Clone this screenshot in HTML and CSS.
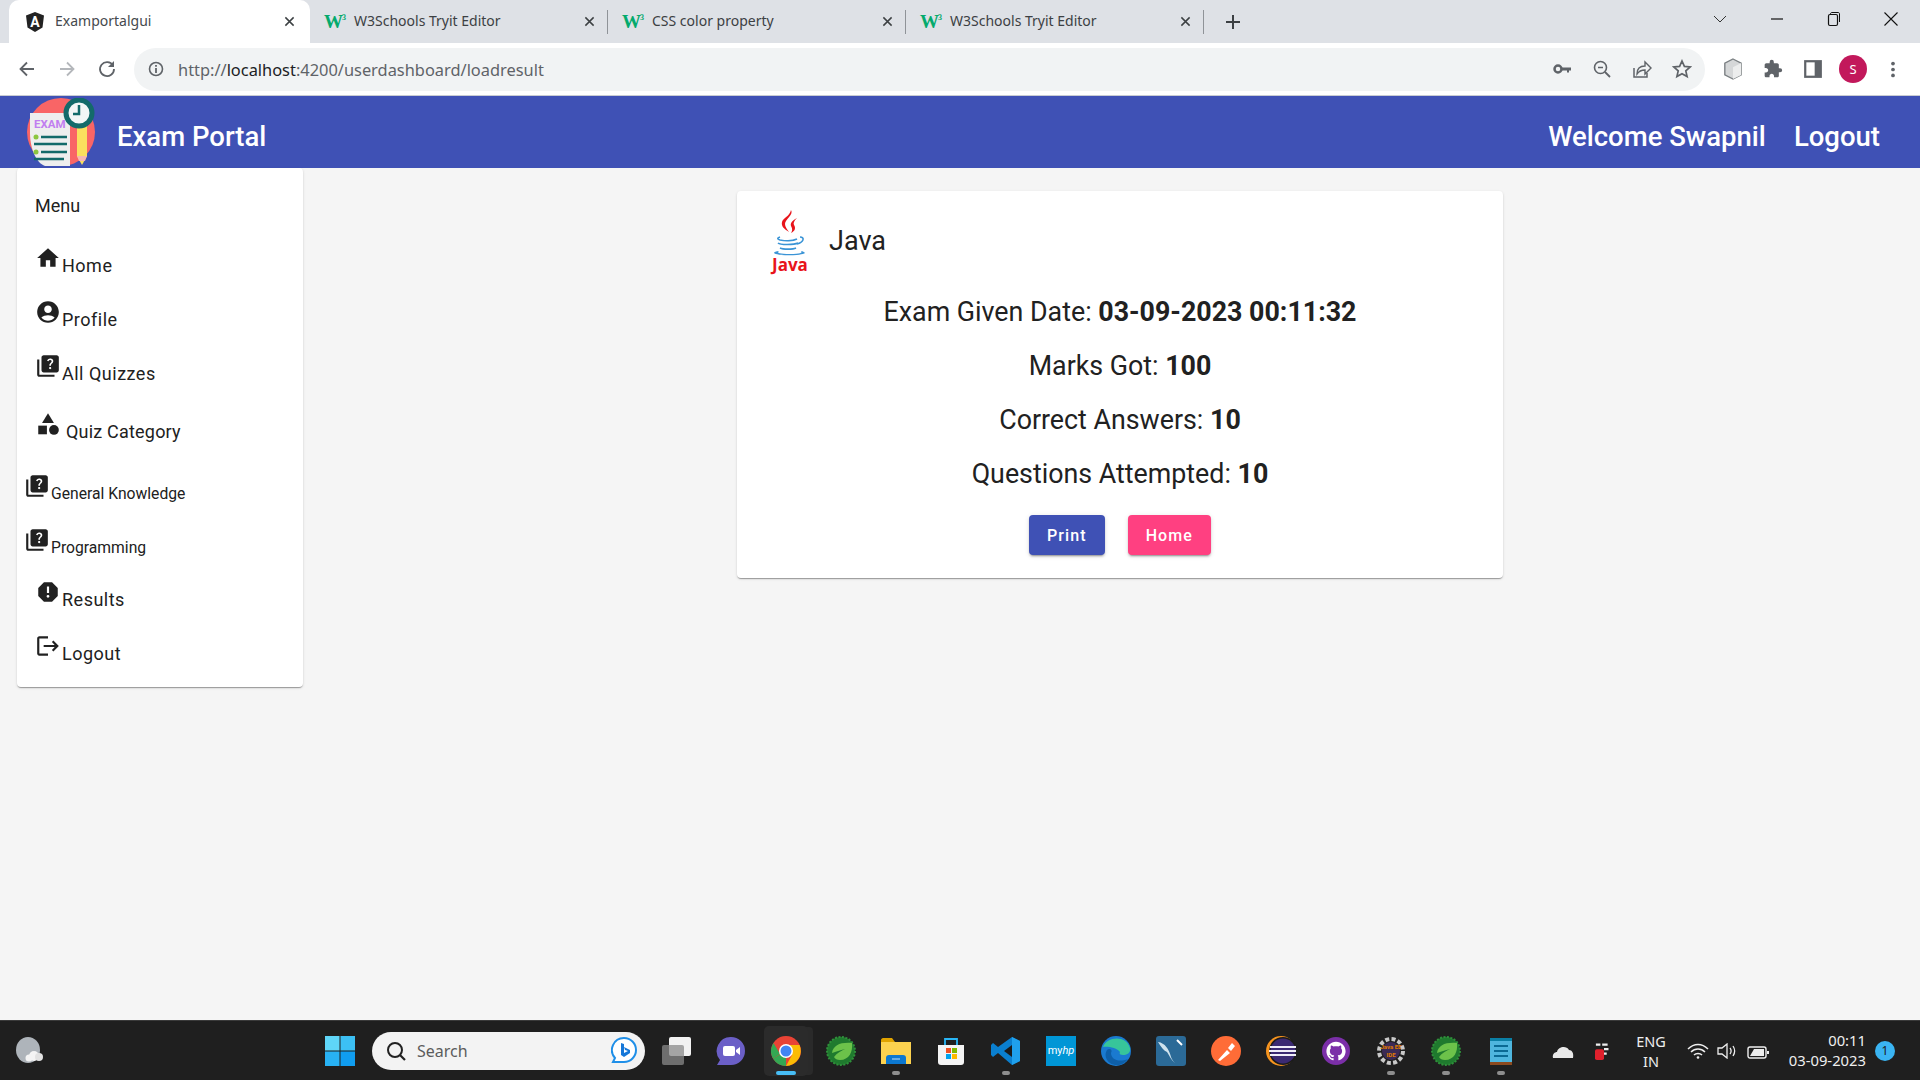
FILE: index.html
```html
<!DOCTYPE html>
<html lang="en">
<head>
    <meta charset="UTF-8">
    <meta name="viewport" content="width=device-width, initial-scale=1.0">
    <title>Examportalgui</title>
    <link rel="stylesheet" href="styles.css">
</head>
<body>
    <!-- shared icons -->
    <svg class="defs" width="0" height="0">
        <symbol id="i-quiz" viewBox="0 0 24 24"><path d="M4 6H2v14c0 1.1.9 2 2 2h14v-2H4V6zm16-4H8c-1.1 0-2 .9-2 2v12c0 1.1.9 2 2 2h12c1.1 0 2-.9 2-2V4c0-1.1-.9-2-2-2zm-5.99 13c-.59 0-1.05-.47-1.05-1.05 0-.59.47-1.04 1.05-1.04.59 0 1.04.45 1.04 1.04-.01.58-.45 1.05-1.04 1.05zm2.5-6.17c-.63.93-1.23 1.21-1.56 1.81-.13.24-.18.4-.18 1.18h-1.52c0-.41-.06-1.08.26-1.65.41-.73 1.18-1.16 1.63-1.8.48-.68.21-1.94-1.14-1.94-.88 0-1.32.67-1.5 1.23l-1.37-.57C11.51 5.96 12.52 5 13.99 5c1.23 0 2.08.56 2.51 1.26.37.61.58 1.73.01 2.57z"/></symbol>
        <symbol id="i-close" viewBox="0 0 12 12"><path d="M1.5 1.5l9 9M10.5 1.5l-9 9" stroke="#3c4043" stroke-width="1.6" fill="none"/></symbol>
        <symbol id="i-spring" viewBox="0 0 30 30"><circle cx="15" cy="15" r="14" fill="#1f7a2e" stroke="#2f8f3a" stroke-width="2" stroke-dasharray="2 1.5"/><path d="M6 17C7 9 15 6 26 7c1 9-3 17-12 17-3 0-5-1-6-3 3-4 7-6 11-8-5 1-9 3-13 4z" fill="#6cc24a"/></symbol>
    </svg>

    <div class="tab-strip">
        <div class="tab tab-active">
            <svg class="favicon" viewBox="0 0 20 20"><polygon points="10,0 19,3.5 17.5,15.5 10,20 2.5,15.5 1,3.5" fill="#222"/><text x="10" y="15" class="ng-letter">A</text></svg>
            <span class="tab-title">Examportalgui</span>
            <svg class="tab-close"><use href="#i-close"/></svg>
        </div>
        <div class="tab tab-sep">
            <span class="w3">W<sup>3</sup></span>
            <span class="tab-title">W3Schools Tryit Editor</span>
            <svg class="tab-close"><use href="#i-close"/></svg>
        </div>
        <div class="tab tab-sep">
            <span class="w3">W<sup>3</sup></span>
            <span class="tab-title">CSS color property</span>
            <svg class="tab-close"><use href="#i-close"/></svg>
        </div>
        <div class="tab tab-sep">
            <span class="w3">W<sup>3</sup></span>
            <span class="tab-title">W3Schools Tryit Editor</span>
            <svg class="tab-close"><use href="#i-close"/></svg>
        </div>
        <svg class="new-tab" viewBox="0 0 16 16"><path d="M8 1v14M1 8h14" stroke="#3c4043" stroke-width="2"/></svg>
        <div class="win-controls">
            <svg viewBox="0 0 16 16"><path d="M2 5l6 6 6-6" stroke="#333" fill="none"/></svg>
            <svg viewBox="0 0 16 16"><path d="M2 8h12" stroke="#111" stroke-width="1.2"/></svg>
            <svg viewBox="0 0 16 16"><path d="M4.5 3.5V3c0-1 .5-1.500 1.500-1.500h6c1 0 1.500.5 1.500 1.500v8" stroke="#111" fill="none"/><rect x="2.500" y="3.500" width="9" height="11" rx="1.500" stroke="#111" fill="none" stroke-width="1.200"/></svg>
            <svg viewBox="0 0 16 16"><path d="M1.500 1.500l13 13M14.500 1.500l-13 13" stroke="#111" stroke-width="1.100"/></svg>
        </div>
    </div>

    <div class="toolbar">
        <svg class="nav-icon" viewBox="0 0 20 20"><path d="M17 10H4M10 3.500L3.500 10l6.500 6.500" stroke="#5f6368" stroke-width="1.800" fill="none"/></svg>
        <svg class="nav-icon" viewBox="0 0 20 20"><path d="M3 10h13M10 3.500l6.500 6.500-6.500 6.500" stroke="#b4b7bb" stroke-width="1.800" fill="none"/></svg>
        <svg class="nav-icon" viewBox="0 0 20 20"><path d="M16 6.500A7 7 0 1 0 17 10" stroke="#5f6368" stroke-width="1.800" fill="none"/><path d="M17 2v6h-6z" fill="#5f6368"/></svg>
        <div class="omnibox">
            <svg class="info" viewBox="0 0 16 16"><circle cx="8" cy="8" r="6.500" stroke="#5f6368" stroke-width="1.600" fill="none"/><path d="M8 7v5M8 4v1.800" stroke="#5f6368" stroke-width="1.800"/></svg>
            <div class="url">http://<span class="host">localhost</span>:4200/userdashboard/loadresult</div>
            <svg class="omni-icon" viewBox="0 0 20 20"><circle cx="6" cy="10" r="3.500" fill="none" stroke="#5f6368" stroke-width="2.500"/><path d="M9 8.500h10v3h-2v2h-2v-2H9z" fill="#5f6368"/></svg>
            <svg class="omni-icon" viewBox="0 0 20 20"><circle cx="8.500" cy="8.500" r="6" stroke="#5f6368" stroke-width="1.600" fill="none"/><path d="M13 13l5 5" stroke="#5f6368" stroke-width="1.800"/><path d="M6 8.500h5" stroke="#5f6368" stroke-width="1.500"/></svg>
            <svg class="omni-icon" viewBox="0 0 20 20"><path d="M2 9v9h13v-4" stroke="#5f6368" stroke-width="1.500" fill="none"/><path d="M5 15c0-5 3-8 8-8V3l6 6-6 6v-4c-4 0-6 1-8 4z" stroke="#5f6368" stroke-width="1.400" fill="none"/></svg>
            <svg class="omni-icon" viewBox="0 0 20 20"><path d="M10 2l2.400 5.400 5.800.6-4.400 3.900 1.300 5.700L10 14.700l-5.100 2.900 1.300-5.700L1.800 8l5.800-.6z" stroke="#5f6368" stroke-width="1.700" fill="none"/></svg>
        </div>
        <div class="ext-icons">
            <svg class="ext-icon" viewBox="0 0 22 24"><path d="M11 1l9 4.500v13L11 23l-9-4.500v-13z" fill="#d5d7d8" stroke="#7b8083" stroke-width="1.500"/><path d="M11 10l9-4.500v13L11 23z" fill="#eceded"/></svg>
            <svg class="ext-icon" viewBox="0 0 24 24"><path d="M20.500 11H19V7c0-1.100-.9-2-2-2h-4V3.500a2.500 2.500 0 0 0-5 0V5H4c-1.100 0-2 .9-2 2v3.800h1.500c1.500 0 2.700 1.200 2.700 2.700S5 16.200 3.500 16.200H2V20c0 1.100.9 2 2 2h3.800v-1.500c0-1.500 1.200-2.700 2.700-2.700s2.700 1.200 2.700 2.700V22H17c1.100 0 2-.9 2-2v-4h1.500a2.500 2.500 0 0 0 0-5z" fill="#5f6368"/></svg>
            <svg class="ext-icon" viewBox="0 0 18 18"><path d="M1 1h16v16H1z" fill="#5f6368"/><path d="M3 3h7.500v12H3z" fill="#fff"/></svg>
            <div class="avatar">S</div>
            <svg class="ext-icon kebab" viewBox="0 0 6 20"><circle cx="3" cy="3" r="2.200" fill="#5f6368"/><circle cx="3" cy="10" r="2.200" fill="#5f6368"/><circle cx="3" cy="17" r="2.200" fill="#5f6368"/></svg>
        </div>
    </div>

    <header class="app-header">
        <svg class="logo" viewBox="0 0 68 68">
            <circle cx="34" cy="34" r="34" fill="#f96566"/>
            <path d="M3 15h34l6 6v47H18C9 65 3 50 3 35z" fill="#eeeeee"/>
            <text x="7" y="30" class="logo-exam">EXAM</text>
            <circle cx="9" cy="39" r="2.500" fill="#8cc63f"/>
            <path d="M14 39h26M7 46h33M14 54h26M7 61h30" stroke="#136a6a" stroke-width="2.500"/>
            <circle cx="9" cy="54" r="2.500" fill="#8cc63f"/>
            <path d="M50 28h10v30l-5 9-5-9z" fill="#fbe05e"/>
            <path d="M50 58h10l-2 5h-6z" fill="#f7b7b2"/>
            <circle cx="52" cy="15" r="13" fill="#f3f6f6" stroke="#136a6a" stroke-width="5"/>
            <path d="M52 7v9h-6" stroke="#136a6a" stroke-width="2.500" fill="none"/>
        </svg>
        <div class="brand">Exam Portal</div>
        <div class="welcome">Welcome Swapnil</div>
        <div class="header-logout">Logout</div>
    </header>

    <main class="page">
        <aside class="sidebar">
            <div class="menu-title">Menu</div>
            <div class="menu-item">
                <svg class="mi" viewBox="0 0 24 24"><path d="M10 20v-6h4v6h5v-8h3L12 3 2 12h3v8z"/></svg>
                <span>Home</span>
            </div>
            <div class="menu-item">
                <svg class="mi" viewBox="0 0 24 24"><path d="M12 2C6.480 2 2 6.480 2 12s4.480 10 10 10 10-4.480 10-10S17.520 2 12 2zm0 4c1.930 0 3.500 1.570 3.500 3.500S13.930 13 12 13s-3.500-1.570-3.500-3.500S10.070 6 12 6zm0 14c-2.030 0-4.430-.82-6.140-2.880C7.550 15.800 9.680 15 12 15s4.450.8 6.140 2.120C16.430 19.180 14.030 20 12 20z"/></svg>
                <span>Profile</span>
            </div>
            <div class="menu-item">
                <svg class="mi"><use href="#i-quiz"/></svg>
                <span>All Quizzes</span>
            </div>
            <div class="menu-item item-category">
                <svg class="mi" viewBox="0 0 24 24"><path d="M12 2l-5.500 9h11z"/><circle cx="17.500" cy="17.500" r="4.500"/><path d="M3 13.500h8v8H3z"/></svg>
                <span>Quiz Category</span>
            </div>
            <div class="menu-item item-sub item-sub-first">
                <svg class="mi"><use href="#i-quiz"/></svg>
                <span>General Knowledge</span>
            </div>
            <div class="menu-item item-sub">
                <svg class="mi"><use href="#i-quiz"/></svg>
                <span>Programming</span>
            </div>
            <div class="menu-item item-results">
                <svg class="mi" viewBox="0 0 24 24"><path d="M15.730 3H8.270L3 8.270v7.460L8.270 21h7.460L21 15.730V8.270L15.730 3zM12 17.300c-.72 0-1.300-.58-1.300-1.300 0-.72.58-1.300 1.300-1.300.72 0 1.300.58 1.300 1.300 0 .72-.58 1.300-1.300 1.300zm1-4.300h-2V7h2v6z"/></svg>
                <span>Results</span>
            </div>
            <div class="menu-item">
                <svg class="mi" viewBox="0 0 24 24"><path d="M17 7l-1.410 1.410L18.170 11H8v2h10.170l-2.580 2.580L17 17l5-5zM4 5h8V3H4c-1.100 0-2 .9-2 2v14c0 1.100.9 2 2 2h8v-2H4V5z"/></svg>
                <span>Logout</span>
            </div>
        </aside>

        <section class="result-card">
            <div class="card-head">
                <svg class="java-logo" viewBox="0 0 40 68">
                    <path d="M21 1c3 5-6 9-6 14 0 3 2 5 4 8-5-3-8-6-7-10 1-4 8-6 9-12z" fill="#e8141b"/>
                    <path d="M27 9c-5 3-7 5-6 8 1 2 2 4 0 7 4-2 5-5 3-8-1-2 0-4 3-7z" fill="#e8141b"/>
                    <path d="M10 28c-3 1-3 2 0 3 5 1 13 1 17-1M8 34c2 2 16 2 20 0M10 39c3 1.500 13 1.500 16 0M30 28c5 0 4 5-3 7" stroke="#3a94d6" stroke-width="1.600" fill="none"/>
                    <path d="M4 44c2 3 28 3 31 0-1-1-2-2-4-2 2 2-1 3-11 3S6 44 9 42c-3 0-5 1-5 2z" fill="#3a94d6"/>
                    <text x="2" y="62" class="java-word">Java</text>
                </svg>
                <div class="card-title">Java</div>
            </div>
            <div class="card-body">
                <p>Exam Given Date: <b>03-09-2023 00:11:32</b></p>
                <p>Marks Got: <b>100</b></p>
                <p>Correct Answers: <b>10</b></p>
                <p>Questions Attempted: <b>10</b></p>
            </div>
            <div class="card-actions">
                <button class="btn btn-primary">Print</button>
                <button class="btn btn-accent">Home</button>
            </div>
        </section>
    </main>

    <footer class="taskbar">
        <svg class="weather" viewBox="0 0 30 30"><ellipse cx="13" cy="14" rx="12" ry="13" fill="#aeb4ba"/><circle cx="19" cy="20" r="5" fill="#f4f4f4"/><circle cx="24" cy="21" r="4" fill="#e2e2e2"/><circle cx="14" cy="22" r="3.500" fill="#f4f4f4"/></svg>

        <svg class="start" viewBox="0 0 30 30">
            <rect x="0" y="0" width="14.500" height="14.500" fill="#5fd6f8"/><rect x="15.500" y="0" width="14.500" height="14.500" fill="#3cc0f4"/>
            <rect x="0" y="15.500" width="14.500" height="14.500" fill="#28b2f4"/><rect x="15.500" y="15.500" width="14.500" height="14.500" fill="#109df0"/>
        </svg>
        <div class="search">
            <svg class="search-glass" viewBox="0 0 20 20"><circle cx="9" cy="9" r="7" stroke="#222" stroke-width="2" fill="none"/><path d="M14 14l5 5" stroke="#222" stroke-width="2.200"/></svg>
            <span class="search-text">Search</span>
            <svg class="bing" viewBox="0 0 26 28"><path d="M13 1a12 12 0 0 1 0 24H2l2-4A12 12 0 0 1 13 1z" fill="#fff" stroke="#1f8fe8" stroke-width="2"/><path d="M10 6l3 1v9l4-2-3-1-1-3 6 3v3l-6 4-3-2z" fill="#1677d8"/></svg>
        </div>

        <div class="apps">
            <div class="app"><svg viewBox="0 0 30 30"><rect x="8" y="1" width="22" height="19" rx="2" fill="#f2f2f2"/><rect x="1" y="9" width="22" height="20" rx="2" fill="#8a8a8a" opacity=".75"/></svg></div>
            <div class="app"><svg viewBox="0 0 30 30"><path d="M15 1a14 14 0 1 1 0 28H1l3-5A14 14 0 0 1 15 1z" fill="#6b5fc7"/><rect x="7" y="10" width="12" height="10" rx="2" fill="#fff"/><path d="M20 14l4-3v8l-4-3z" fill="#fff"/></svg></div>
            <div class="app app-active"><svg viewBox="0 0 30 30"><circle cx="15" cy="15" r="15" fill="#e94335"/><path d="M15 15L2 22.500A15 15 0 0 0 15 30z" fill="#34a853"/><path d="M2 22.500A15 15 0 0 1 2.500 7L9 18z" fill="#34a853"/><path d="M15 9h13.500A15 15 0 0 1 15 30l6-11z" fill="#fbbc05"/><circle cx="15" cy="15" r="7" fill="#fff"/><circle cx="15" cy="15" r="5.500" fill="#4285f4"/></svg></div>
            <div class="app"><svg><use href="#i-spring"/></svg></div>
            <div class="app app-open"><svg viewBox="0 0 30 30"><path d="M0 4c0-1 1-2 2-2h9l3 4h16v4H0z" fill="#e0a300"/><path d="M0 6h30v22H0z" fill="#fcd24f"/><path d="M5 22c0-2 1-3 3-3h14c2 0 3 1 3 3v6H5z" fill="#0c78d0"/><path d="M11 23h8" stroke="#bfe0fa" stroke-width="1"/></svg></div>
            <div class="app"><svg viewBox="0 0 30 30"><path d="M2 9h26v17c0 2-1 3-3 3H5c-2 0-3-1-3-3z" fill="#f4f4f4"/><path d="M9 9V3h12v6" stroke="#29b6f6" stroke-width="1.800" fill="none"/><rect x="10" y="12" width="5" height="5" fill="#f25022"/><rect x="16" y="12" width="5" height="5" fill="#7fba00"/><rect x="10" y="18" width="5" height="5" fill="#00a4ef"/><rect x="16" y="18" width="5" height="5" fill="#ffb900"/></svg></div>
            <div class="app app-open"><svg viewBox="0 0 30 30"><path d="M21 1l8 4v20l-8 4-14-12-5 4-2-2v-10l2-2 5 4z" fill="#0a7fcf"/><path d="M21 9l-8 6 8 6z" fill="#1b1b1b"/><path d="M21 1l8 4v20l-8 4z" fill="#1fa0ec"/></svg></div>
            <div class="app"><div class="myhp">my<i>hp</i></div></div>
            <div class="app"><svg viewBox="0 0 30 30"><circle cx="15" cy="15" r="15" fill="#1a7ad0"/><path d="M2 11C5 1 25-2 29 12c1 5-3 7-7 7-3 0-4-1-3-3-3-5-14-6-17-5z" fill="#37c59a"/><path d="M10 17c0 6 7 10 17 6-4 6-12 8-18 4-4-3-6-8-3-13 2-2 6-1 4 3z" fill="#0e5fa8"/></svg></div>
            <div class="app"><svg viewBox="0 0 30 30"><rect width="30" height="30" rx="3" fill="#2b6a97"/><path d="M2 6c7 1 11 7 13 15 1 3 3 5 4 6-4-3-6-8-8-11-3-1-6-5-9-10z" fill="#cfe3ee"/><path d="M21 4l5 5" stroke="#fff" stroke-width="2"/></svg></div>
            <div class="app"><svg viewBox="0 0 30 30"><circle cx="15" cy="15" r="15" fill="#ff6c37"/><path d="M7 24l9-10 3 3-10 8zM17 12l4-5 3 3-4 5z" fill="#fff"/></svg></div>
            <div class="app"><svg viewBox="0 0 30 30"><circle cx="15" cy="15" r="15" fill="#f7941e"/><circle cx="17" cy="15" r="14" fill="#1b1b1b"/><circle cx="17" cy="15" r="12.500" fill="#3b2a73"/><path d="M4 11h26M3 15h27M4 19h26" stroke="#f0eef8" stroke-width="2"/></svg></div>
            <div class="app"><svg viewBox="0 0 30 30"><circle cx="15" cy="15" r="14" fill="#7b2fa8"/><path transform="translate(5.400 5.400) scale(.8)" fill="#fff" d="M12 .297c-6.630 0-12 5.373-12 12 0 5.303 3.438 9.800 8.205 11.385.6.113.82-.258.82-.577 0-.285-.01-1.040-.015-2.040-3.338.724-4.042-1.610-4.042-1.610C4.422 18.070 3.633 17.700 3.633 17.700c-1.087-.744.084-.729.084-.729 1.205.084 1.838 1.236 1.838 1.236 1.070 1.835 2.809 1.305 3.495.998.108-.776.417-1.305.76-1.605-2.665-.3-5.466-1.332-5.466-5.930 0-1.310.465-2.380 1.235-3.220-.135-.303-.54-1.523.105-3.176 0 0 1.005-.322 3.300 1.230.96-.267 1.980-.399 3-.405 1.020.006 2.040.138 3 .405 2.280-1.552 3.285-1.230 3.285-1.230.645 1.653.24 2.873.12 3.176.765.84 1.230 1.910 1.230 3.220 0 4.610-2.805 5.625-5.475 5.920.42.36.81 1.096.81 2.220 0 1.606-.015 2.896-.015 3.286 0 .315.21.69.825.57C20.565 22.092 24 17.592 24 12.297c0-6.627-5.373-12-12-12"/></svg></div>
            <div class="app app-open"><svg viewBox="0 0 30 30"><circle cx="15" cy="15" r="12" fill="none" stroke="#c9c9c9" stroke-width="4" stroke-dasharray="4 2.300"/><circle cx="15" cy="15" r="9" fill="#3b2a55"/><text x="15" y="13" class="gear-text">Java EE</text><text x="15" y="21" class="gear-text">IDE</text></svg></div>
            <div class="app app-open"><svg><use href="#i-spring"/></svg></div>
            <div class="app app-open"><svg viewBox="0 0 30 30"><rect x="4" y="2" width="22" height="27" fill="#4fb6de"/><path d="M4 2h22v3H4z" fill="#0b7fa5"/><path d="M4 26h22v3H4z" fill="#8c4a1f"/><path d="M8 10h14M8 15h14M8 20h14" stroke="#0b6a94" stroke-width="2"/></svg></div>
        </div>

        <div class="tray">
            <svg class="tray-icon" viewBox="0 0 22 16"><path d="M1 15c-1-4 2-6 4-6 1-5 9-7 12-2 3 0 5 3 4 8z" fill="#e8e8e8"/></svg>
            <svg class="tray-icon tray-red" viewBox="0 0 20 20"><rect x="0" y="8" width="10" height="12" rx="2" fill="#e0202c"/><path d="M1 3h5M8 3h6M10 8h5M10 13h3" stroke="#eee" stroke-width="2.500"/></svg>
            <div class="lang">ENG<br>IN</div>
            <svg class="tray-icon" viewBox="0 0 22 16"><path d="M1 6c6-6 14-6 20 0M4 9c4-4 10-4 14 0M7 12c2-2 6-2 8 0" stroke="#eee" stroke-width="1.500" fill="none"/><circle cx="11" cy="14.500" r="1.300" fill="#eee"/></svg>
            <svg class="tray-icon" viewBox="0 0 22 16"><path d="M1 5h4l5-4v14l-5-4H1z" stroke="#eee" stroke-width="1.300" fill="none"/><path d="M13 5c1.500 2 1.500 4 0 6M16 3c2 3 2 7 0 10" stroke="#eee" stroke-width="1.300" fill="none"/></svg>
            <svg class="tray-icon" viewBox="0 0 22 16"><rect x="1" y="4" width="18" height="11" rx="2" stroke="#eee" stroke-width="1.400" fill="none"/><path d="M3 13l4-7h10v7z" fill="#eee"/><path d="M20 8h2v3h-2z" fill="#eee"/></svg>
            <div class="clock"><div>00:11</div><div>03-09-2023</div></div>
            <div class="badge">1</div>
        </div>
    </footer>
</body>
</html>
```

FILE: styles.css
```css
* {
    box-sizing: border-box;
}
html, body {
    height: 100%;
}
body {
    margin: 0;
    display: flex;
    flex-direction: column;
    height: 100vh;
    overflow: hidden;
    font-family: Roboto, Arial, sans-serif;
    color: #212121;
    background: #f5f5f5;
}
.defs {
    position: absolute;
}

/* browser chrome */
.tab-strip {
    display: flex;
    align-items: center;
    flex: 0 0 43px;
    height: 43px;
    padding-left: 9px;
    background: #dee1e6;
}
.tab {
    display: flex;
    align-items: center;
    width: 298px;
    height: 43px;
    padding: 0 9px 0 14px;
    font-family: "Noto Sans", sans-serif;
    font-size: 14px;
    color: #3c4043;
}
.tab-active {
    width: 301px;
    padding-left: 16px;
    padding-right: 11px;
    background: #fff;
    border-radius: 10px 10px 0 0;
    color: #45494d;
}
.tab-sep {
    position: relative;
}
.tab-sep::after {
    content: "";
    position: absolute;
    right: 0;
    top: 10px;
    height: 24px;
    width: 1px;
    background: #8f9398;
}
.favicon {
    width: 20px;
    height: 20px;
    margin-right: 10px;
}
.ng-letter {
    font: 700 14px Roboto, sans-serif;
    fill: #fff;
    text-anchor: middle;
}
.w3 {
    width: 20px;
    margin-right: 10px;
    font: 700 19px "Liberation Serif", serif;
    color: #04aa6d;
    letter-spacing: -1px;
    white-space: nowrap;
}
.w3 sup {
    font-size: 8px;
    letter-spacing: 0;
    vertical-align: 8px;
    line-height: 0;
}
.tab-title {
    flex: 1;
    margin-top: -2px;
}
.tab-close {
    width: 11px;
    height: 11px;
    margin-right: 4px;
}
.new-tab {
    width: 16px;
    height: 16px;
    margin-left: 21px;
}
.win-controls {
    display: flex;
    align-items: center;
    gap: 41px;
    margin-left: auto;
    margin-right: 21px;
    margin-top: -6px;
}
.win-controls svg {
    width: 16px;
    height: 16px;
}
.toolbar {
    display: flex;
    align-items: center;
    flex: 0 0 53px;
    height: 53px;
    padding-left: 17px;
    background: #fff;
    border-bottom: 1px solid #c9ccd3;
}
.nav-icon {
    flex: none;
    width: 20px;
    height: 20px;
    margin-right: 20px;
}
.omnibox {
    display: flex;
    flex: none;
    align-items: center;
    width: 1571px;
    height: 43px;
    margin-left: -3px;
    padding-left: 14px;
    padding-right: 13px;
    background: #f1f3f4;
    border-radius: 22px;
}
.info {
    width: 16px;
    height: 16px;
    margin-right: 14px;
}
.url {
    flex: 1;
    font-family: "Noto Sans", sans-serif;
    font-size: 16.4px;
    color: #5f6368;
}
.host {
    color: #202124;
}
.omni-icon {
    width: 20px;
    height: 20px;
    margin-left: 20px;
}
.ext-icons {
    display: flex;
    align-items: center;
    gap: 20px;
    margin-left: 18px;
}
.ext-icon {
    width: 20px;
    height: 22px;
}
.kebab {
    height: 17px;
}
.avatar {
    display: flex;
    align-items: center;
    justify-content: center;
    width: 28px;
    height: 28px;
    margin: 0 -4px;
    border-radius: 50%;
    background: #c2185b;
    color: #fff;
    font-family: "Noto Sans", sans-serif;
    font-size: 13px;
}

/* app header */
.app-header {
    display: flex;
    align-items: center;
    flex: 0 0 72px;
    height: 72px;
    padding: 0 40px 0 27px;
    background: #3f51b5;
    color: #fff;
    font-size: 27.5px;
    font-weight: 500;
}
.logo {
    width: 68px;
    height: 68px;
    margin-right: 22px;
}
.logo-exam {
    font: 700 11.5px Roboto, sans-serif;
    fill: #c17ef0;
}
.brand, .welcome, .header-logout {
    padding-top: 9px;
}
.welcome {
    margin-left: auto;
}
.header-logout {
    margin-left: 28px;
}

/* page */
.page {
    display: flex;
    align-items: flex-start;
    flex: 1;
    padding-left: 17px;
}
.sidebar {
    width: 286px;
    height: 519px;
    padding: 0 0 0 18px;
    background: #fff;
    border-radius: 4px;
    box-shadow: 0 2px 1px -1px rgba(0,0,0,.2), 0 1px 1px 0 rgba(0,0,0,.14), 0 1px 3px 0 rgba(0,0,0,.12);
}
.menu-title {
    height: 51px;
    padding-top: 26px;
    font-size: 18px;
    line-height: 24px;
}
.menu-item {
    display: flex;
    align-items: flex-end;
    height: 54px;
    font-size: 18px;
    letter-spacing: .5px;
    line-height: 24px;
}
.menu-item span {
    margin-bottom: -5px;
}
.mi {
    flex: 0 0 26px;
    width: 26px;
    height: 26px;
    margin-right: 1px;
    margin-bottom: 2px;
    fill: #212121;
}
.item-category {
    height: 58px;
    letter-spacing: .2px;
}
.item-category .mi {
    margin-right: 5px;
}
.item-sub {
    margin-left: -11px;
    font-size: 15.7px;
    letter-spacing: 0;
}
.item-sub-first {
    height: 62px;
}
.item-results {
    height: 52px;
}
.result-card {
    width: 766px;
    height: 387px;
    margin-top: 23px;
    margin-left: 434px;
    padding: 18px 16px 0 33px;
    background: #fff;
    border-radius: 4px;
    box-shadow: 0 2px 1px -1px rgba(0,0,0,.2), 0 1px 1px 0 rgba(0,0,0,.14), 0 1px 3px 0 rgba(0,0,0,.12);
}
.card-head {
    display: flex;
    align-items: center;
    height: 68px;
}
.java-logo {
    width: 40px;
    height: 68px;
    margin-right: 19px;
}
.java-word {
    font: 700 17px "Open Sans", sans-serif;
    fill: #e8141b;
}
.card-title {
    font-size: 27px;
    margin-top: -4px;
}
.card-body {
    margin-left: -33px;
    margin-right: -16px;
    margin-top: 8px;
    text-align: center;
    font-size: 26.8px;
    line-height: 54px;
}
.card-body p {
    margin: 0;
}
.card-actions {
    display: flex;
    justify-content: center;
    gap: 23px;
    margin-left: -33px;
    margin-right: -16px;
    margin-top: 14px;
}
.btn {
    height: 40px;
    padding: 0 18px;
    border: none;
    border-radius: 4px;
    color: #fff;
    font-family: Roboto, sans-serif;
    font-size: 16px;
    font-weight: 500;
    letter-spacing: 1.100px;
    box-shadow: 0 3px 1px -2px rgba(0,0,0,.2), 0 2px 2px 0 rgba(0,0,0,.14), 0 1px 5px 0 rgba(0,0,0,.12);
}
.btn-primary {
    background: #3f51b5;
}
.btn-accent {
    background: #ff4081;
}

/* windows taskbar */
.taskbar {
    display: flex;
    align-items: center;
    flex: 0 0 60px;
    height: 60px;
    padding-left: 15px;
    background: #1f1f1f;
    border-top: 1px solid #3a3a3a;
}
.taskbar > * {
    flex: none;
}
.weather {
    width: 30px;
    height: 30px;
    margin-right: 280px;
}
.start {
    width: 30px;
    height: 30px;
    margin-right: 17px;
}
.search {
    display: flex;
    align-items: center;
    width: 273px;
    height: 38px;
    padding: 0 8px 0 14px;
    background: #f3f3f3;
    border-radius: 19px;
}
.search-glass {
    width: 20px;
    height: 20px;
    margin-right: 11px;
}
.search-text {
    flex: 1;
    font-family: "Noto Sans", sans-serif;
    font-size: 16px;
    color: #5c5c5c;
}
.bing {
    width: 26px;
    height: 28px;
}
.apps {
    display: flex;
    align-items: center;
    margin-left: 3.500px;
}
.app {
    position: relative;
    display: flex;
    flex: none;
    align-items: center;
    justify-content: center;
    width: 55px;
    height: 59px;
}
.app svg {
    width: 30px;
    height: 30px;
}
.app-open::after, .app-active::after {
    content: "";
    position: absolute;
    left: 23.500px;
    bottom: 5px;
    width: 8px;
    height: 4px;
    border-radius: 2px;
    background: #8e8e8e;
}
.app-active {
    background: #2b2b2b;
    border-radius: 5px;
    height: 50px;
    width: 44px;
    margin: 0 5.500px;
    box-shadow: 6px 0 0 -1px #2a2a2a;
}
.app-active::after {
    left: 12px;
    bottom: 1px;
    width: 20px;
    background: #47bdf5;
}
.myhp {
    width: 30px;
    height: 30px;
    background: #0096d6;
    color: #fff;
    font-size: 11px;
    line-height: 30px;
    text-align: center;
}
.gear-text {
    font: 700 6px Roboto, sans-serif;
    fill: #e07b00;
    text-anchor: middle;
}
.tray {
    display: flex;
    align-items: center;
    margin-left: 23.500px;
    color: #eee;
}
.tray-icon {
    flex: none;
    width: 22px;
    height: 16px;
    margin-right: 8px;
}
.tray-red {
    width: 18px;
    height: 18px;
    margin-left: 13px;
    margin-right: 19px;
}
.lang {
    width: 38px;
    margin-right: 17px;
    font-family: "Noto Sans", sans-serif;
    font-size: 14.5px;
    line-height: 20px;
    text-align: center;
}
.clock {
    width: 89px;
    margin-bottom: 2px;
    font-family: "Noto Sans", sans-serif;
    font-size: 14.8px;
    line-height: 20px;
    text-align: right;
    white-space: nowrap;
}
.badge {
    width: 20px;
    height: 20px;
    margin-left: 9px;
    border-radius: 50%;
    background: #3ab4f2;
    color: #1a1a1a;
    font-family: "Noto Sans", sans-serif;
    font-size: 12px;
    line-height: 20px;
    text-align: center;
}
```
